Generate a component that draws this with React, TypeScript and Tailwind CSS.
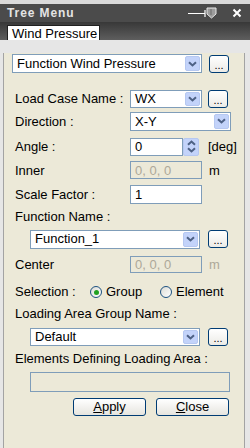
import React from "react";

const font = "font-['Liberation_Sans',Arial,sans-serif]";

function Chevron({ up = false }: { up?: boolean }) {
  return (
    <svg width="9" height="6" viewBox="0 0 9 6" className={up ? "rotate-180" : ""}>
      <path d="M1 1.2l3.5 3.3L8 1.2" fill="none" stroke="#4d6185" strokeWidth={2} />
    </svg>
  );
}

function Select({ value, w, h = "h-[19px]" }: { value: string; w: string; h?: string }) {
  return (
    <div className={`${w} ${h} flex border border-[#7f9db9] bg-white`}>
      <div className="flex-1 flex items-center pl-[4px] text-[13px] text-black truncate">{value}</div>
      <div className="w-[15px] m-[1px] flex items-center justify-center rounded-[2px] bg-[#c3d3fa] border border-[#b6c8f1]">
        <Chevron />
      </div>
    </div>
  );
}

function Dots() {
  return (
    <div className="w-[20px] h-[18px] flex items-end justify-center pb-[2px] rounded-[3px] border border-[#003c74] bg-gradient-to-b from-white to-[#ecebe6] text-[11px] leading-[10px] text-black">
      ...
    </div>
  );
}

function Field({ value, w, disabled = false, h = "h-[18px]" }: { value: string; w: string; disabled?: boolean; h?: string }) {
  return (
    <div
      className={`${w} ${h} flex items-center pl-[4px] border border-[#7f9db9] text-[13px] ${
        disabled ? "bg-[#ece9d8] text-[#aca899]" : "bg-white text-black"
      }`}
    >
      {value}
    </div>
  );
}

function Radio({ checked }: { checked: boolean }) {
  return (
    <div className="w-[12px] h-[12px] rounded-full border border-[#1c5180] bg-gradient-to-br from-[#dcdcd5] to-white flex items-center justify-center">
      {checked && <div className="w-[5px] h-[5px] rounded-full bg-[#21a121]" />}
    </div>
  );
}

function Label({ children, w = "w-[115px]" }: { children: React.ReactNode; w?: string }) {
  return <div className={`${w} shrink-0 text-[13px] text-black`}>{children}</div>;
}

export default function App() {
  return (
    <div className={`w-[250px] h-[448px] bg-[#e6e6e6] overflow-hidden ${font}`}>
      {/* top strip */}
      <div className="h-[4px] bg-[#dadada]" />

      {/* title bar */}
      <div className="h-[18px] bg-[#4b4b4b] flex items-center pl-[7px] pr-[8px]">
        <span className="text-[12px] font-bold tracking-[0.9px] text-[#e4e4e4]">Tree Menu</span>
        <div className="flex-1" />
        <svg width="32" height="14" viewBox="0 0 32 14" className="mr-[12px]">
          <path d="M0 7.5h17M17 4v7" stroke="#ffffff" strokeWidth={1.2} fill="none" />
          <path d="M19 2h9v6l-4.5 4L19 8z" fill="#9c9c9c" stroke="#e8e8e8" strokeWidth={1} />
          <path d="M23 3v6" stroke="#6a6a6a" strokeWidth={1} />
        </svg>
        <svg width="10" height="10" viewBox="0 0 10 10">
          <path d="M1.5 1.5l7 7M8.5 1.5l-7 7" stroke="#ffffff" strokeWidth={2} />
        </svg>
      </div>

      {/* tab strip */}
      <div className="h-[18px] bg-gradient-to-b from-[#383838] to-[#5e5e5e] flex items-end pl-[7px]">
        <div className="h-[15px] w-[93px] bg-white border border-b-0 border-[#202020] flex items-center pl-[4px] text-[13px] leading-[13px] text-black">
          Wind Pressure
        </div>
      </div>

      {/* panel */}
      <div className="ml-[3px] mr-[5px] h-[402px] bg-[#ece9d8] border-l border-r border-b border-[#a3a3a3] text-[13px] text-black">
        <div className="flex items-center mt-[13px] ml-[8px] gap-[7px] pt-px">
          <Select value="Function Wind Pressure" w="w-[190px]" />
          <Dots />
        </div>

        <div className="flex items-center mt-[16px] pl-[11px]">
          <Label>Load Case Name :</Label>
          <Select value="WX" w="w-[72px]" h="h-[18px]" />
          <div className="ml-[6px]">
            <Dots />
          </div>
        </div>

        <div className="flex items-center mt-[3px] pl-[11px]">
          <Label>Direction :</Label>
          <Select value="X-Y" w="w-[101px]" />
        </div>

        <div className="flex items-center mt-[6px] pl-[11px]">
          <Label>Angle :</Label>
          <Field value="0" w="w-[53px]" />
          <div className="w-[16px] h-[18px] flex flex-col items-center justify-center gap-[1px] rounded-[2px] bg-[#c3d3fa] border border-[#b6c8f1]">
            <Chevron up />
            <Chevron />
          </div>
          <span className="ml-[9px]">[deg]</span>
        </div>

        <div className="flex items-center mt-[4px] pl-[11px]">
          <Label>Inner</Label>
          <Field value="0, 0, 0" w="w-[72px]" disabled />
          <span className="ml-[7px]">m</span>
        </div>

        <div className="flex items-center mt-[5px] pl-[11px]">
          <Label>Scale Factor :</Label>
          <Field value="1" w="w-[72px]" h="h-[19px]" />
        </div>

        <div className="mt-[5px] pl-[11px] h-[14px] leading-[14px]">Function Name :</div>

        <div className="flex items-center mt-[6px] ml-[26px]">
          <Select value="Function_1" w="w-[170px]" />
          <div className="ml-[8px]">
            <Dots />
          </div>
        </div>

        <div className="flex items-center mt-[6px] pl-[11px]">
          <Label>Center</Label>
          <Field value="0, 0, 0" w="w-[72px]" h="h-[17px]" disabled />
          <span className="ml-[7px] text-[#aca899]">m</span>
        </div>

        <div className="flex items-center mt-[10px] pl-[11px] h-[16px]">
          <Label w="w-[75px]">Selection :</Label>
          <Radio checked />
          <span className="ml-[4px] w-[54px]">Group</span>
          <Radio checked={false} />
          <span className="ml-[4px]">Element</span>
        </div>

        <div className="mt-[7px] pl-[11px] h-[14px] leading-[14px]">Loading Area Group Name :</div>

        <div className="flex items-center mt-[7px] ml-[26px]">
          <Select value="Default" w="w-[170px]" h="h-[18px]" />
          <div className="ml-[8px]">
            <Dots />
          </div>
        </div>

        <div className="mt-[6px] pl-[11px] h-[14px] leading-[14px]">Elements Defining Loading Area :</div>

        <div className="mt-[6px] ml-[26px] w-[200px] h-[20px] border border-[#7f9db9] bg-[#ece9d8]" />

        <div className="flex mt-[6px] ml-[69px] gap-[10px]">
          <button className="w-[73px] h-[18px] rounded-[3px] border border-[#003c74] bg-gradient-to-b from-white to-[#e6e5df] text-[13px] leading-[14px] text-black">
            <span className="underline">A</span>pply
          </button>
          <button className="w-[73px] h-[18px] rounded-[3px] border border-[#003c74] bg-gradient-to-b from-white to-[#e6e5df] text-[13px] leading-[14px] text-black">
            <span className="underline">C</span>lose
          </button>
        </div>
      </div>
    </div>
  );
}
